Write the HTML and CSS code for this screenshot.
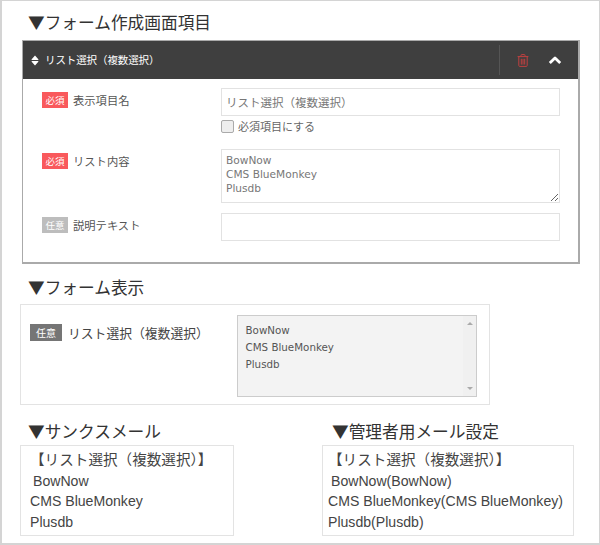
FILE: index.html
```html
<!DOCTYPE html>
<html lang="ja">
<head>
<meta charset="utf-8">
<title>フォーム作成画面項目</title>
<link rel="stylesheet" href="styles.css">
</head>
<body>
<main class="frame">
  <h2 class="heading heading-first">▼フォーム作成画面項目</h2>
  <section class="card">
    <header class="card-head">
      <svg class="sort-icon" viewBox="0 0 8 11" width="8" height="11" aria-hidden="true"><path d="M4 .5 7.3 4.2a.4.4 0 0 1-.3.7H1a.4.4 0 0 1-.3-.7zM4 10.5.7 6.8a.4.4 0 0 1 .3-.7h6a.4.4 0 0 1 .3.7z" fill="#fff"/></svg>
      <span class="card-title">リスト選択（複数選択）</span>
      <div class="card-actions">
        <svg class="trash-icon" viewBox="0 0 12 13" width="12" height="13" aria-hidden="true"><path d="M.6 2.6h10.8M4 2.4V1.2c0-.4.2-.6.6-.6h2.8c.4 0 .6.2.6.6v1.2M1.800 2.800v8.600c0 .7.4 1 1 1h6.400c.6 0 1-.3 1-1V2.800M4.300 4.800v5.800M6 4.800v5.800M7.700 4.800v5.800" fill="none" stroke="#c04040" stroke-width="1"/></svg>
        <svg class="chevron-icon" viewBox="0 0 14 9" width="14" height="9" aria-hidden="true"><path d="M1.800 7 7 2l5.200 5" fill="none" stroke="#fff" stroke-width="2.800" stroke-linejoin="round"/></svg>
      </div>
    </header>
    <div class="card-body">
      <div class="row row-name">
        <div class="row-label"><span class="badge badge-req">必須</span><span>表示項目名</span></div>
        <div class="row-field">
          <div class="field field-line">リスト選択（複数選択）</div>
          <label class="check"><input type="checkbox"><span>必須項目にする</span></label>
        </div>
      </div>
      <div class="row row-list">
        <div class="row-label"><span class="badge badge-req">必須</span><span>リスト内容</span></div>
        <div class="row-field">
          <textarea class="field field-area">BowNow
CMS BlueMonkey
Plusdb</textarea>
        </div>
      </div>
      <div class="row row-desc">
        <div class="row-label"><span class="badge badge-opt">任意</span><span>説明テキスト</span></div>
        <div class="row-field"><div class="field field-line"></div></div>
      </div>
    </div>
  </section>

  <h2 class="heading heading-form">▼フォーム表示</h2>
  <section class="preview">
    <div class="preview-label"><span class="badge badge-dark">任意</span><span>リスト選択（複数選択）</span></div>
    <div class="listbox">
      <ul class="listbox-items">
        <li>BowNow</li>
        <li>CMS BlueMonkey</li>
        <li>Plusdb</li>
      </ul>
      <div class="scrollbar"><span class="arrow arrow-up"></span><span class="arrow arrow-down"></span></div>
    </div>
  </section>

  <div class="mails">
    <section class="mail mail-thanks">
      <h2 class="heading">▼サンクスメール</h2>
      <div class="mail-box">
        <p class="mail-title">【リスト選択（複数選択）】</p>
        <p class="mail-first">BowNow</p>
        <p>CMS BlueMonkey</p>
        <p>Plusdb</p>
      </div>
    </section>
    <section class="mail mail-admin">
      <h2 class="heading">▼管理者用メール設定</h2>
      <div class="mail-box">
        <p class="mail-title">【リスト選択（複数選択）】</p>
        <p class="mail-first">BowNow(BowNow)</p>
        <p>CMS BlueMonkey(CMS BlueMonkey)</p>
        <p>Plusdb(Plusdb)</p>
      </div>
    </section>
  </div>
</main>
</body>
</html>
```

FILE: styles.css
```css
* { box-sizing: border-box; }
html, body { margin: 0; padding: 0; background: #fff; }
body { font-family: "Noto Sans CJK JP", "Liberation Sans", sans-serif; color: #333; }

.frame {
  width: 600px;
  height: 545px;
  border: 1px solid #d4d4d4;
  border-width: 1px 1px 2px 2px;
  padding: 0 20px 0 18px;
  overflow: hidden;
}

.heading {
  margin: 0;
  font-size: 16.700px;
  font-weight: 400;
  line-height: 24px;
  color: #333;
  white-space: nowrap;
}
.heading-first { margin: 9px 0 6px 8px; }
.heading-form { margin: 11px 0 5px 8px; }

.card {
  margin-left: 2px;
  width: 558px;
  height: 224px;
  border: 1px solid #aaa;
  border-bottom-width: 2px;
  border-right-width: 2px;
  background: #fff;
}
.card-head {
  height: 38px;
  background: #3f3f3f;
  display: flex;
  align-items: center;
  padding-left: 8px;
  color: #fff;
}
.card-title {
  margin-left: 6px;
  margin-bottom: 2px;
  font-size: 10.500px;
  font-weight: 400;
  letter-spacing: -0.100px;
}
.card-actions {
  margin-left: auto;
  width: 79px;
  height: 30px;
  border-left: 1px solid #555;
  display: flex;
  align-items: center;
  padding-left: 17px;
  gap: 19px;
}

.card-body { padding: 9px 19px 0 19px; }
.row { display: flex; }
.row-label {
  width: 179px;
  display: flex;
  align-items: center;
  gap: 5px;
  height: 18px;
  margin-top: 3px;
  font-size: 11.300px;
  color: #555;
  white-space: nowrap;
}
.row-field { flex: 1; min-width: 0; }
.row-list { margin-top: 15px; }
.row-desc { margin-top: 10px; }

.badge {
  display: inline-block;
  width: 26px;
  height: 16px;
  font-size: 9.500px;
  line-height: 16px;
  text-align: center;
  color: #fff;
}
.badge-req { background: #f9595c; }
.badge-opt { background: #bdbdbd; }
.badge-dark { width: 32px; height: 17px; line-height: 17px; font-size: 10px; background: #757575; }

.field {
  display: block;
  width: 339px;
  border: 1px solid #e2e2e2;
  background: #fff;
  color: #777;
  font-family: "DejaVu Sans", "Noto Sans CJK JP", sans-serif;
}
.field-line {
  height: 28px;
  padding: 0 4px;
  font-family: "Noto Sans CJK JP", sans-serif;
  font-size: 11.500px;
  line-height: 26px;
}
.field-area {
  height: 54px;
  margin: 0;
  padding: 3px 4px;
  font-size: 10.600px;
  line-height: 14px;
  resize: vertical;
  outline: none;
}

.check {
  display: flex;
  align-items: center;
  gap: 4px;
  margin-top: 2px;
  height: 16px;
  font-size: 11px;
  color: #666;
}
.check input {
  appearance: none;
  width: 13px;
  height: 13px;
  margin: 0;
  border: 1px solid #aaa;
  border-radius: 2px;
  background: #eee;
}

.preview {
  width: 470px;
  height: 101px;
  border: 1px solid #e3e3e3;
  display: flex;
  padding: 10px 12px 7px 9px;
}
.preview-label {
  width: 207px;
  height: 17px;
  margin-top: 9px;
  display: flex;
  align-items: center;
  gap: 6px;
  font-size: 12.800px;
  color: #444;
  white-space: nowrap;
}
.listbox {
  width: 241px;
  height: 82px;
  border: 1px solid #ccc;
  background: #f3f3f3;
  display: flex;
  justify-content: space-between;
}
.listbox-items {
  list-style: none;
  margin: 0;
  padding: 6px 0 0 8px;
  font-family: "DejaVu Sans", sans-serif;
  font-size: 10.300px;
  line-height: 17px;
  color: #555;
}
.scrollbar {
  width: 13px;
  background: #f0f0f0;
  display: flex;
  flex-direction: column;
  justify-content: space-between;
  align-items: center;
  padding: 6px 0;
}
.arrow { width: 0; height: 0; border-left: 3px solid transparent; border-right: 3px solid transparent; }
.arrow-up { border-bottom: 3px solid #aaa; }
.arrow-down { border-top: 3px solid #aaa; }

.mails { display: flex; margin-top: 14px; }
.mail .heading { margin-left: 8px; margin-bottom: 2px; }
.mail-thanks { width: 302px; }
.mail-admin .heading { margin-left: 10px; }
.mail-box {
  height: 91px;
  border: 1px solid #e3e3e3;
  font-family: "Liberation Sans", "Noto Sans CJK JP", sans-serif;
  font-size: 14.100px;
  line-height: 20.500px;
  color: #444;
  padding: 0 0 0 9px;
}
.mail-thanks .mail-box { width: 214px; }
.mail-admin .mail-box { width: 252px; padding-left: 5px; }
.mail-box p { margin: 0; white-space: nowrap; }
.mail-box .mail-title { padding-top: 4px; font-size: 14.600px; }
.mail-box .mail-first { padding-left: 3px; }
```
